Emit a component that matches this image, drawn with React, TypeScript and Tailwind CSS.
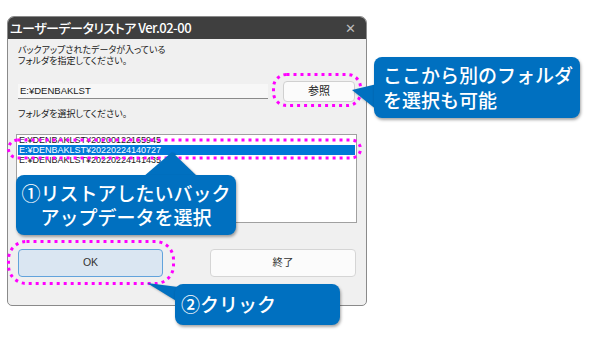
const JP = "font-['Noto_Sans_CJK_JP','Noto_Sans',sans-serif]";
const UI = "font-['Liberation_Sans','Noto_Sans_CJK_JP',sans-serif] [font-feature-settings:'palt']";

const backups = [
  "E:¥DENBAKLST¥20200122165945",
  "E:¥DENBAKLST¥20220224140727",
  "E:¥DENBAKLST¥20220224141435",
];

function Dialog() {
  return (
    <div className="flex h-[290px] w-[360px] flex-col overflow-hidden rounded-t-[7px] rounded-b-[5px] border border-[#8a8a8a] bg-[#f0f0f0]">
      <div className="flex h-[22px] items-center justify-between bg-[#3f3f3f] pl-[2px] pr-[10px]">
        <span className={`${JP} text-[13px] font-medium tracking-[-0.5px] text-white [font-feature-settings:'palt']`}>
          ユーザーデータリストア Ver.02-00
        </span>
        <span className="text-[13px] leading-none text-[#bdbdbd]">✕</span>
      </div>
      <div className={`${UI} flex flex-1 flex-col pl-[10px] pr-[9px] pt-[6px] text-[9px] text-[#1a1a1a]`}>
        <p className="leading-[11px]">
          バックアップされたデータが入っている
          <br />
          フォルダを指定してください。
        </p>
        <div className="mt-[14px] flex h-[21px] items-center">
          <div className="flex h-[15px] w-[250px] items-center border-b border-[#8a8a8a] bg-[#f7f7f7] pl-[2px] text-[9.5px]">
            E:¥DENBAKLST
          </div>
          <button className="ml-[15px] flex h-[21px] w-[72px] items-center justify-center rounded-[4px] border border-[#d0d0d0] bg-[#fbfbfb] text-[11px] text-[#222]">
            参照
          </button>
        </div>
        <p className="mt-[7px] leading-[11px]">フォルダを選択してください。</p>
        <div className="-ml-[2px] mt-[14px] h-[89px] w-[341px] border border-[#a0a0a0] bg-white px-[1px]">
          {backups.map((b, i) => (
            <div
              key={b}
              className={`flex h-[10px] items-center pl-[1px] text-[9px] leading-none ${
                i === 1 ? "bg-[#0078d7] text-white" : "text-[#1a1a1a]"
              }`}
            >
              {b}
            </div>
          ))}
        </div>
        <div className="mt-[26px] flex w-[338px] justify-between">
          <button className="flex h-[28px] w-[145px] items-center justify-center rounded-[4px] border border-[#62a3dc] bg-[#dae6f2] text-[10.5px] text-[#333]">
            OK
          </button>
          <button className="flex h-[28px] w-[146px] items-center justify-center rounded-[4px] border border-[#d5d5d5] bg-[#fbfbfb] text-[10.5px] text-[#333]">
            終了
          </button>
        </div>
      </div>
    </div>
  );
}

function Annotations() {
  return (
    <svg className="pointer-events-none absolute left-0 top-0" width="600" height="340" viewBox="0 0 600 340">
      <g fill="none" stroke="#ff00ff" strokeWidth="3" strokeDasharray="3 4">
        <rect x="273.5" y="74.5" width="87" height="31" rx="13" />
        <rect x="8.5" y="140" width="352" height="18" rx="9" />
        <rect x="8.5" y="241.5" width="165" height="42" rx="18" />
      </g>
      <g fill="#0070c0" style={{ filter: "drop-shadow(1px 1px 1px rgba(0,0,0,0.3))" }}>
        <polygon points="143,177 172,152 198,177" />
        <polygon points="147,283 178,287 178,302" />
        <polygon points="352,90 377,84 377,110" />
      </g>
    </svg>
  );
}

function Callout({ className, children }: { className: string; children: React.ReactNode }) {
  return (
    <div
      className={`${JP} absolute rounded-[8px] bg-[#0070c0] text-[19px] font-medium text-white shadow-[1px_2px_3px_rgba(0,0,0,0.35)] ${className}`}
    >
      {children}
    </div>
  );
}

export default function App() {
  return (
    <div className="relative h-[340px] w-[600px] overflow-hidden bg-white pl-[7px] pt-[16px]">
      <Dialog />
      <Annotations />
      <Callout className="left-[16px] top-[175px] h-[60px] w-[220px] pt-[6px] text-center leading-[24px]">
        ①リストアしたいバック
        <br />
        アップデータを選択
      </Callout>
      <Callout className="left-[175px] top-[284px] flex h-[41px] w-[165px] items-center pl-[6px]">
        ②クリック
      </Callout>
      <Callout className="left-[374px] top-[57px] h-[61px] w-[206px] pl-[9px] pt-[5px] leading-[25px]">
        ここから別のフォルダ
        <br />
        を選択も可能
      </Callout>
    </div>
  );
}
